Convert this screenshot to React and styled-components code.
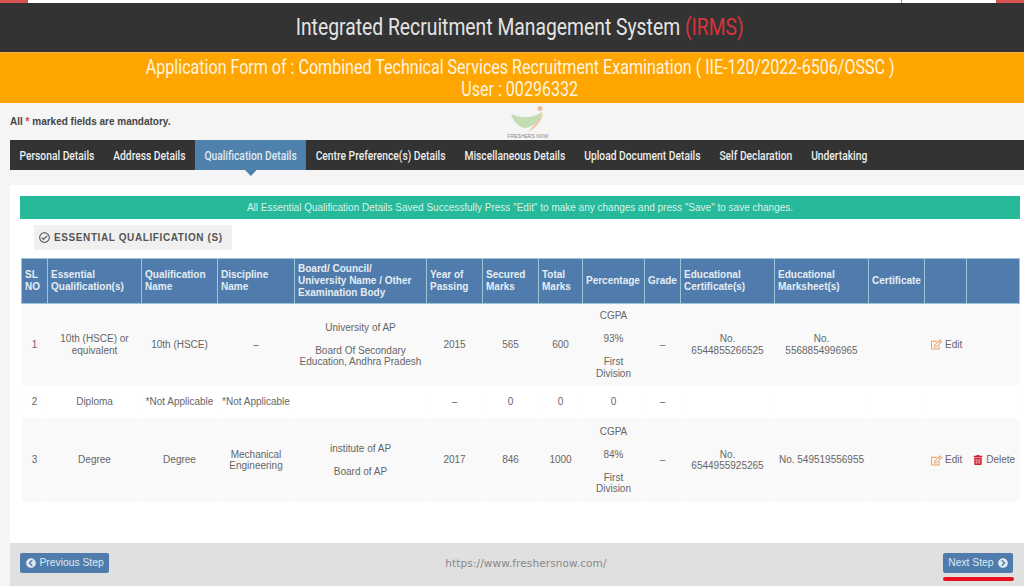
import styled, { createGlobalStyle } from "styled-components";
import {
  FaRegCheckCircle,
  FaChevronCircleLeft,
  FaChevronCircleRight,
  FaRegEdit,
  FaTrashAlt,
} from "react-icons/fa";

const columnWidths = [26, 94, 76, 77, 132, 56, 56, 44, 62, 36, 94, 94, 56, 42, 53];

const headings = [
  "SL NO",
  "Essential Qualification(s)",
  "Qualification Name",
  "Discipline Name",
  "Board/ Council/\nUniversity Name / Other\nExamination Body",
  "Year of Passing",
  "Secured Marks",
  "Total Marks",
  "Percentage",
  "Grade",
  "Educational Certificate(s)",
  "Educational Marksheet(s)",
  "Certificate",
  "",
  "",
];

const navItems = [
  "Personal Details",
  "Address Details",
  "Qualification Details",
  "Centre Preference(s) Details",
  "Miscellaneous Details",
  "Upload Document Details",
  "Self Declaration",
  "Undertaking",
];

const rows = [
  {
    no: 1,
    name: "10th (HSCE) or equivalent",
    qualification: "10th (HSCE)",
    discipline: "–",
    board: ["University of AP", "Board Of Secondary Education, Andhra Pradesh"],
    year: "2015",
    secured: "565",
    total: "600",
    percentage: ["CGPA", "93%", "First Division"],
    grade: "–",
    certificate: "No. 6544855266525",
    marksheet: "No. 5568854996965",
    canDelete: false,
    height: 82,
  },
  {
    no: 2,
    name: "Diploma",
    qualification: "*Not Applicable",
    discipline: "*Not Applicable",
    board: [],
    year: "–",
    secured: "0",
    total: "0",
    percentage: ["0"],
    grade: "–",
    certificate: "",
    marksheet: "",
    canDelete: false,
    height: 33,
    plain: true,
  },
  {
    no: 3,
    name: "Degree",
    qualification: "Degree",
    discipline: "Mechanical Engineering",
    board: ["institute of AP", "Board of AP"],
    year: "2017",
    secured: "846",
    total: "1000",
    percentage: ["CGPA", "84%", "First Division"],
    grade: "–",
    certificate: "No. 6544955925265",
    marksheet: "No. 549519556955",
    canDelete: true,
    height: 83,
  },
];

const App = () => {
  return (
    <Page>
      <GlobalStyle />
      <TopStrip>
        <StripEnd />
        <StripMiddle>
          <StripDivider />
        </StripMiddle>
        <StripEnd />
      </TopStrip>
      <Header>
        <Squeezed $scale={0.84}>
          Integrated Recruitment Management System <Red>(IRMS)</Red>
        </Squeezed>
      </Header>
      <Banner>
        <Squeezed $scale={0.803}>Application Form of : Combined Technical Services Recruitment Examination ( IIE-120/2022-6506/OSSC )</Squeezed>
        <Squeezed $scale={0.803}>User : 00296332</Squeezed>
      </Banner>
      <NoticeRow>
        <Notice>
          All <Star>*</Star> marked fields are mandatory.
        </Notice>
        <Logo>
          <svg width="40" height="28" viewBox="0 0 40 28">
            <circle cx="32" cy="3.5" r="2.5" fill="#f0bd9a" />
            <path d="M3 9 C12 13 24 14 34 7 C33 15 27 21 18 23 C11 23 5 16 3 9Z" fill="#c4dcb2" />
            <path d="M35 8 C34 16 28 23 20 27 C26 20 31 15 35 8Z" fill="#f2c6a4" />
          </svg>
          <LogoText>FRESHERS NOW</LogoText>
        </Logo>
      </NoticeRow>
      <Nav>
        <NavList>
          {navItems.map((item, i) => (
            <NavItem key={item} $active={i === 2}>
              {item}
            </NavItem>
          ))}
        </NavList>
      </Nav>
      <Panel>
        <PanelBody>
          <Alert>All Essential Qualification Details Saved Successfully Press "Edit" to make any changes and press "Save" to save changes.</Alert>
          <SectionTag>
            <FaRegCheckCircle size={11} />
            ESSENTIAL QUALIFICATION (S)
          </SectionTag>
          <Table>
            <colgroup>
              {columnWidths.map((w, i) => (
                <Col key={i} $w={w} />
              ))}
            </colgroup>
            <thead>
              <tr>
                {headings.map((h, i) => (
                  <Th key={i}>{h}</Th>
                ))}
              </tr>
            </thead>
            <tbody>
              {rows.map((row) => (
                <Row key={row.no} $plain={row.plain} $h={row.height}>
                  <Td>{row.no}</Td>
                  <Td>{row.name}</Td>
                  <Td>{row.qualification}</Td>
                  <Td>{row.discipline}</Td>
                  <Td>
                    {row.board.map((line) => (
                      <CellPara key={line}>{line}</CellPara>
                    ))}
                  </Td>
                  <Td>{row.year}</Td>
                  <Td>{row.secured}</Td>
                  <Td>{row.total}</Td>
                  <Td>
                    {row.percentage.map((line) => (
                      <CellPara key={line}>{line}</CellPara>
                    ))}
                  </Td>
                  <Td>{row.grade}</Td>
                  <Td>{row.certificate}</Td>
                  <Td>{row.marksheet}</Td>
                  <Td />
                  <Td colSpan={2}>
                    {!row.plain && (
                      <Actions>
                        <Action>
                          <FaRegEdit size={11} color="#ef9a55" />
                          Edit
                        </Action>
                        {row.canDelete && (
                          <Action>
                            <FaTrashAlt size={10} color="#d2202f" />
                            Delete
                          </Action>
                        )}
                      </Actions>
                    )}
                  </Td>
                </Row>
              ))}
            </tbody>
          </Table>
        </PanelBody>
        <Footer>
          <StepButton>
            <FaChevronCircleLeft size={10} />
            Previous Step
          </StepButton>
          <Watermark>https://www.freshersnow.com/</Watermark>
          <StepButton>
            Next Step
            <FaChevronCircleRight size={10} />
          </StepButton>
          <RedMark />
        </Footer>
      </Panel>
    </Page>
  );
};

export default App;

const GlobalStyle = createGlobalStyle`
  html, body {
    margin: 0;
    padding: 0;
    background: #f5f5f5;
  }
  * {
    box-sizing: border-box;
  }
`;

const Page = styled.div`
  width: 1024px;
  height: 586px;
  overflow: hidden;
  display: flex;
  flex-direction: column;
  background: #f5f5f5;
  font-family: "Liberation Sans", Arial, sans-serif;
  color: #555;
`;

const TopStrip = styled.div`
  display: flex;
  height: 3px;
  background: #fff;
`;

const StripEnd = styled.div`
  width: 28px;
  background: #d9534f;
`;

const StripMiddle = styled.div`
  flex: 1;
  display: flex;
  justify-content: flex-end;
  padding-right: 94px;
`;

const StripDivider = styled.div`
  width: 1px;
  background: #999;
`;

const Header = styled.header`
  height: 49px;
  display: flex;
  align-items: center;
  justify-content: center;
  padding-left: 16px;
  background: #333333;
  color: #e4e4e4;
  font-family: Roboto, sans-serif;
  font-size: 23px;
`;

// no condensed face is installed, so the narrow headings are squeezed sideways
const Squeezed = styled.div`
  white-space: nowrap;
  transform: scaleX(${(p) => p.$scale});
`;

const Red = styled.span`
  color: #d9343b;
`;

const Banner = styled.div`
  height: 51px;
  display: flex;
  flex-direction: column;
  align-items: center;
  padding: 3px 0 0 16px;
  background: #ffa500;
  border-top: 1px solid #f0b040;
  color: #fff4e0;
  font-family: Roboto, sans-serif;
  font-size: 20px;
  line-height: 22px;
`;

const NoticeRow = styled.div`
  position: relative;
  height: 37px;
  display: flex;
  align-items: center;
  padding-left: 10px;
`;

const Notice = styled.div`
  font-size: 10px;
  font-weight: 700;
  color: #444;
`;

const Star = styled.span`
  color: #d9343b;
`;

const Logo = styled.div`
  position: absolute;
  left: 507px;
  top: 2px;
  width: 42px;
  display: flex;
  flex-direction: column;
  align-items: center;
`;

const LogoText = styled.div`
  font-size: 5px;
  line-height: 6px;
  white-space: nowrap;
  color: #888;
`;

const Nav = styled.nav`
  height: 30px;
  margin-left: 10px;
  background: #333333;
  font-family: Roboto, sans-serif;
  font-size: 12.5px;
  font-weight: 500;
  color: #eee;
`;

const NavList = styled.div`
  display: flex;
  height: 100%;
  white-space: nowrap;
  transform: scaleX(0.822);
  transform-origin: left center;
`;

const NavItem = styled.div`
  position: relative;
  display: flex;
  align-items: center;
  padding: 0 11.5px;
  background: ${(p) => (p.$active ? "#4f81ad" : "transparent")};
  color: ${(p) => (p.$active ? "#dfe9f2" : "#eee")};

  &::after {
    content: "";
    display: ${(p) => (p.$active ? "block" : "none")};
    position: absolute;
    left: 50%;
    bottom: -6px;
    margin-left: -7px;
    border-left: 7px solid transparent;
    border-right: 7px solid transparent;
    border-top: 6px solid #4f81ad;
  }
`;

const Panel = styled.div`
  flex: 1;
  margin: 15px 0 0 10px;
  background: #fff;
  display: flex;
  flex-direction: column;
`;

const PanelBody = styled.div`
  flex: 1;
  padding: 11px 4px 0 10px;
`;

const Alert = styled.div`
  height: 23px;
  line-height: 23px;
  background: #26b99a;
  color: #d9f3ec;
  font-size: 10px;
  text-align: center;
`;

const SectionTag = styled.div`
  display: flex;
  align-items: center;
  gap: 4px;
  width: 198px;
  height: 25px;
  margin: 6px 0 8px 14px;
  padding-left: 5px;
  background: #f0f0f0;
  color: #555;
  font-size: 10px;
  font-weight: 700;
  letter-spacing: 0.6px;
  white-space: nowrap;
`;

const Table = styled.table`
  width: 999px;
  margin-left: 1px;
  table-layout: fixed;
  border-collapse: collapse;
  font-size: 10px;
`;

const Col = styled.col`
  width: ${(p) => p.$w}px;
`;

const Th = styled.th`
  height: 45px;
  padding: 0 2px 0 3px;
  background: #4f7cac;
  border: 1px solid #9fc4d8;
  color: #e6edf3;
  font-weight: 700;
  line-height: 12px;
  text-align: left;
  white-space: pre-line;
`;

const Row = styled.tr`
  height: ${(p) => p.$h}px;
  background: ${(p) => (p.$plain ? "#fff" : "#f9f9f9")};
`;

const Td = styled.td`
  padding: 0 3px;
  border: 1px solid #fcfcfc;
  line-height: 11.5px;
  text-align: center;
  color: #666;
`;

const CellPara = styled.p`
  margin: 0;
  & + & {
    margin-top: 11.5px;
  }
`;

const Actions = styled.div`
  display: flex;
  gap: 11px;
  padding-left: 3px;
`;

const Action = styled.span`
  display: inline-flex;
  align-items: center;
  gap: 3px;
`;

const Footer = styled.div`
  position: relative;
  height: 43px;
  display: flex;
  align-items: center;
  justify-content: space-between;
  padding: 0 11px 4px 10px;
  background: #e0e0e0;
`;

const StepButton = styled.div`
  display: flex;
  align-items: center;
  gap: 4px;
  height: 20px;
  padding: 0 5.5px;
  background: #4f7cac;
  border-radius: 2px;
  color: #dfe9f2;
  font-size: 10.3px;
`;

const Watermark = styled.div`
  font-family: "DejaVu Sans", sans-serif;
  font-size: 10.5px;
  letter-spacing: 0.1px;
  color: #888;
`;

const RedMark = styled.div`
  position: absolute;
  right: 10px;
  bottom: 5px;
  width: 71px;
  height: 4px;
  border-radius: 2px;
  background: #e8101c;
`;
